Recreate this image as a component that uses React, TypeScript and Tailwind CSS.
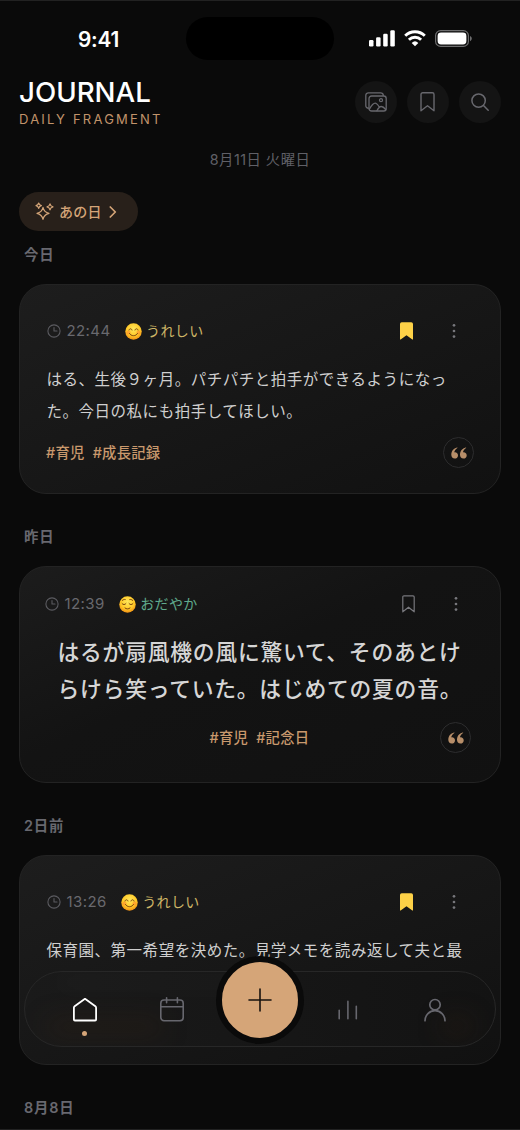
import React from "react";

type Mood = "happy" | "calm";

type Entry = {
  label: string;
  time: string;
  mood: Mood;
  lines: string[];
  tags: string[];
  saved: boolean;
  featured?: boolean;
};

const entries: Entry[] = [
  {
    label: "今日",
    time: "22:44",
    mood: "happy",
    lines: ["はる、生後９ヶ月。パチパチと拍手ができるようになっ", "た。今日の私にも拍手してほしい。"],
    tags: ["#育児", "#成長記録"],
    saved: true,
  },
  {
    label: "昨日",
    time: "12:39",
    mood: "calm",
    lines: ["はるが扇風機の風に驚いて、そのあとけ", "らけら笑っていた。はじめての夏の音。"],
    tags: ["#育児", "#記念日"],
    saved: false,
    featured: true,
  },
  {
    label: "2日前",
    time: "13:26",
    mood: "happy",
    lines: ["保育園、第一希望を決めた。見学メモを読み返して夫と最"],
    tags: [],
    saved: true,
  },
];

const moods = {
  happy: { label: "うれしい", color: "text-[#cdb566]" },
  calm: { label: "おだやか", color: "text-[#5fa98c]" },
};

function MoodFace({ mood }: { mood: Mood }) {
  return (
    <svg width="17" height="17" viewBox="0 0 34 34" fill="none" className="shrink-0">
      <defs>
        <radialGradient id={`face-${mood}`} cx="0.5" cy="0.35" r="0.68">
          <stop offset="0" stopColor="#ffe85c" />
          <stop offset="0.6" stopColor="#ffc928" />
          <stop offset="1" stopColor="#f08a12" />
        </radialGradient>
      </defs>
      <circle cx="17" cy="17" r="16.5" fill={`url(#face-${mood})`} />
      {mood === "happy" ? (
        <>
          <circle cx="7" cy="19" r="4" fill="#ff7a2e" opacity="0.45" />
          <circle cx="27" cy="19" r="4" fill="#ff7a2e" opacity="0.45" />
          <path d="M8 14c1-3.500 5-3.500 6 0M20 14c1-3.500 5-3.500 6 0M9 21c3 6 13 6 16 0" stroke="#7a4410" strokeWidth="2" strokeLinecap="round" />
        </>
      ) : (
        <path d="M6 15c2 3 6 3 8 0M20 15c2 3 6 3 8 0M6.500 9c2-2 4-2.500 6-2M27.500 9c-2-2-4-2.500-6-2M12 24c3 2.500 7 2.500 10 0" stroke="#7a4410" strokeWidth="2" strokeLinecap="round" />
      )}
    </svg>
  );
}

function ClockIcon() {
  return (
    <svg width="14" height="14" viewBox="0 0 14 14" fill="none" stroke="#5b5b60" strokeWidth="1.100" strokeLinecap="round" strokeLinejoin="round">
      <circle cx="7" cy="7" r="6.100" />
      <path d="M7 3.500V7h3" />
    </svg>
  );
}

function SmallBookmark({ saved }: { saved: boolean }) {
  return saved ? (
    <svg width="13" height="18" viewBox="0 0 13 18" fill="#fdd147">
      <path d="M0 2a1.800 1.800 0 0 1 1.800-1.800h9.400A1.800 1.800 0 0 1 13 2v15.200a.4.4 0 0 1-.65.3L6.500 13.200.65 17.500A.4.4 0 0 1 0 17.200Z" />
    </svg>
  ) : (
    <svg width="13" height="18" viewBox="0 0 13 18" fill="none" stroke="#77777c" strokeWidth="1.200" strokeLinejoin="round">
      <path d="M.8 2A1.200 1.200 0 0 1 2 .8h9A1.200 1.200 0 0 1 12.200 2v14.800L6.500 12.200.8 16.800Z" />
    </svg>
  );
}

function QuoteButton() {
  return (
    <button className="flex size-[31px] shrink-0 items-center justify-center rounded-full border border-[#2d2d2e]">
      <svg width="16" height="12" viewBox="0 0 16 12" fill="#b78e69">
        <path d="M6 .4C2.600 1.200.3 4 .3 7.700c0 2.300 1.400 3.900 3.400 3.900 1.900 0 3.300-1.400 3.300-3.200 0-1.800-1.300-3.100-3-3.100-.4 0-.7.1-.8.1C3.500 3.700 4.600 2.200 6.300 1c.4-.3.1-.7-.3-.6Z" />
        <path d="M14.700.4C11.300 1.200 9 4 9 7.700c0 2.300 1.400 3.900 3.400 3.900 1.900 0 3.300-1.400 3.300-3.200 0-1.800-1.300-3.100-3-3.100-.4 0-.7.1-.8.1.3-1.700 1.400-3.200 3.100-4.400.4-.3.1-.7-.3-.6Z" />
      </svg>
    </button>
  );
}

function StatusBar() {
  return (
    <div className="flex h-[75px] items-center pl-[77px] pr-[48px]">
      <div className="w-[109px] pt-[2px] pl-[1px] text-[20.800px] font-semibold tracking-[-0.200px] text-white">9:41</div>
      <div className="h-[43px] w-[148px] rounded-full bg-black" />
      <div className="ml-auto flex items-center gap-[9px]">
        <svg width="26" height="17" viewBox="0 0 26 17" fill="#fff">
          <rect x="0" y="10" width="4.500" height="6.500" rx="1.200" />
          <rect x="7.100" y="7.200" width="4.500" height="9.300" rx="1.200" />
          <rect x="14.200" y="3.800" width="4.500" height="12.700" rx="1.200" />
          <rect x="21.300" y="0.300" width="4.500" height="16.200" rx="1.200" />
        </svg>
        <svg width="22" height="17" viewBox="0 0 22 17" fill="none" stroke="#fff" strokeWidth="2.900">
          <path d="M1.200 5.700a14 14 0 0 1 19.600 0" />
          <path d="M4.900 9.700a8.700 8.700 0 0 1 12.200 0" />
          <path d="M11 16.300 7.700 12.900a4.800 4.800 0 0 1 6.600 0Z" fill="#fff" stroke="none" />
        </svg>
        <svg width="37" height="17" viewBox="0 0 37 17" fill="none">
          <rect x="0.600" y="0.600" width="32.800" height="15.800" rx="5" stroke="#6d6d6e" strokeWidth="1.200" />
          <rect x="2.600" y="2.500" width="28.800" height="12" rx="3.400" fill="#fff" />
          <path d="M35 6v5.200c1.100-.4 1.800-1.400 1.800-2.600S36.100 6.400 35 6Z" fill="#6d6d6e" />
        </svg>
      </div>
    </div>
  );
}

function RoundButton({ children }: { children: React.ReactNode }) {
  return <button className="flex size-[42px] items-center justify-center rounded-full bg-[#141414]">{children}</button>;
}

function Header() {
  return (
    <header className="flex h-[55px] items-start justify-between pl-[19px] pr-[19.500px]">
      <div>
        <h1 className="mt-[1px] text-[27.700px] leading-[30px] font-medium text-white">JOURNAL</h1>
        <p className="mt-[3px] text-[13px] leading-[18px] tracking-[2.200px] text-[#c1946b]">DAILY FRAGMENT</p>
      </div>
      <div className="mt-[5px] flex gap-[10px]">
        <RoundButton>
          <svg width="22" height="20" viewBox="0 0 22 20" fill="none" stroke="#68686e" strokeWidth="1.300" strokeLinecap="round" strokeLinejoin="round">
            <path d="M3.500 16.200A2.500 2.500 0 0 1 .8 13.700V3.400A2.600 2.600 0 0 1 3.400.8h12.300a2.600 2.600 0 0 1 2.600 2.600" />
            <rect x="4" y="4" width="17.200" height="15" rx="2.600" />
            <circle cx="16" cy="8.200" r="1.500" />
            <path d="M4.400 17.200c2.400-4.300 4.600-6 5.800-6s2.200 1.100 4 3.600M11.900 18.700c1.700-3.200 3-4.200 4.300-4.200s2.900 1 4.500 3" />
          </svg>
        </RoundButton>
        <RoundButton>
          <svg width="15" height="20" viewBox="0 0 15 20" fill="none" stroke="#68686e" strokeWidth="1.400" strokeLinejoin="round">
            <path d="M1 2.500A1.700 1.700 0 0 1 2.700.8h9.600A1.700 1.700 0 0 1 14 2.500v16.300l-6.500-5.100L1 18.800Z" />
          </svg>
        </RoundButton>
        <RoundButton>
          <svg width="18" height="18" viewBox="0 0 18 18" fill="none" stroke="#68686e" strokeWidth="1.500" strokeLinecap="round">
            <circle cx="7.600" cy="7.600" r="6.700" />
            <path d="m12.500 12.500 4.700 4.700" />
          </svg>
        </RoundButton>
      </div>
    </header>
  );
}

function EntryCard({ entry }: { entry: Entry }) {
  const mood = moods[entry.mood];
  const featured = entry.featured;

  return (
    <article
      className={`mx-[19px] overflow-hidden rounded-[27px] border border-[#232323] ${
        featured
          ? "h-[217px] bg-linear-to-br from-[#1c1c1c] via-[#131313] via-45% to-[#111111] pt-[25px] pr-[29px] pl-[25px]"
          : "h-[210px] bg-linear-to-br from-[#1d1d1d] to-[#111111] pt-[34px] pr-[26px] pl-[27px]"
      }`}
    >
      <div className="flex h-6 items-center">
        <ClockIcon />
        <span className="ml-[5.500px] text-[15px] tracking-[0.400px] text-[#69696e]">{entry.time}</span>
        <span className="ml-[14px] flex items-center gap-[4.500px]">
          <MoodFace mood={entry.mood} />
          <span className={`-mt-[1px] text-[14px] tracking-[0.400px] ${mood.color}`}>{mood.label}</span>
        </span>
        <span className={`ml-auto flex items-center gap-[39px] ${featured ? "pr-[13px]" : "pr-[18px]"}`}>
          <SmallBookmark saved={entry.saved} />
          <svg width="4" height="16" viewBox="0 0 4 16" fill="#77777c">
            <circle cx="2" cy="2.300" r="1.350" />
            <circle cx="2" cy="8" r="1.350" />
            <circle cx="2" cy="13.600" r="1.350" />
          </svg>
        </span>
      </div>
      <div
        className={
          featured
            ? "mt-[18px] ml-[12.500px] text-[21.800px] leading-[37px] font-medium tracking-[0.750px] whitespace-nowrap text-[#d6d6d6]"
            : "mt-[21px] ml-[-0.500px] text-[15.500px] leading-[32px] tracking-[0.520px] whitespace-nowrap text-[#cfcfcf]"
        }
      >
        {entry.lines.map((line) => (
          <p key={line}>{line}</p>
        ))}
      </div>
      {entry.tags.length > 0 && (
        <div className={`flex items-center ${featured ? "mt-[14px]" : "mt-[9px]"}`}>
          {featured && <span className="w-[34px]" />}
          <div className={`flex gap-[8px] text-[14.300px] font-medium tracking-[0.300px] text-[#c9996d] ${featured ? "grow justify-center" : "ml-[-1px]"}`}>
            {entry.tags.map((tag) => (
              <span key={tag}>{tag}</span>
            ))}
          </div>
          <div className={featured ? "" : "ml-auto"}>
            <QuoteButton />
          </div>
        </div>
      )}
    </article>
  );
}

function DayLabel({ children }: { children: React.ReactNode }) {
  return <h2 className="ml-[24px] text-[14.400px] leading-[20px] font-semibold tracking-[0.800px] text-[#68686f]">{children}</h2>;
}

function TabBar() {
  return (
    <nav className="absolute top-[970px] left-[24px] h-[76px] w-[472px]">
      <div className="relative h-full overflow-hidden rounded-full border border-[#272727] bg-linear-to-r from-[#1a1a1a] to-[#131313]">
        <div className="absolute top-[46px] left-[20px] h-[18px] w-[120px] rounded-full bg-[#3a2410]/25 blur-md" />
        <div className="absolute top-[44px] left-[415px] h-[20px] w-[34px] rounded-full bg-[#3a2410]/25 blur-md" />
        <div className="absolute top-[4px] left-[30px] h-[12px] w-[190px] rounded-full bg-white/3 blur-md" />
        <div className="relative grid h-full grid-cols-5 items-center px-[16px] pt-[2px]">
          <div className="relative flex justify-center">
            <svg width="26" height="26" viewBox="0 0 26 26" fill="none" stroke="#fff" strokeWidth="1.800" strokeLinejoin="round">
              <path d="M1.900 10.800a2 2 0 0 1 .75-1.500L13 1.800l10.350 7.500a2 2 0 0 1 .75 1.500v11.700a1 1 0 0 1-1 1H2.900a1 1 0 0 1-1-1Z" />
            </svg>
            <span className="absolute top-[34px] size-[5px] rounded-full bg-[#d5a578]" />
          </div>
          <svg width="26" height="26" viewBox="0 0 26 26" fill="none" stroke="#67676e" strokeWidth="1.600" strokeLinecap="round" strokeLinejoin="round" className="justify-self-center">
            <rect x="1.800" y="3" width="22.400" height="20.700" rx="3.200" />
            <path d="M1.800 9.700h22.400M7.600.8v5M18.400.8v5" />
          </svg>
          <span />
          <svg width="22" height="20" viewBox="0 0 22 20" fill="none" stroke="#67676e" strokeWidth="1.600" strokeLinecap="round" className="justify-self-center">
            <path d="M2.200 10.200v8.500M10.900 1.400v17.300M19.300 6.300v12.400" />
          </svg>
          <svg width="24" height="24" viewBox="0 0 24 24" fill="none" stroke="#67676e" strokeWidth="1.700" strokeLinecap="round" className="justify-self-center">
            <circle cx="12" cy="6.700" r="5.200" />
            <path d="M2 22.700a10 10 0 0 1 20 0" />
          </svg>
        </div>
      </div>
      <button className="absolute top-[-15px] left-[192px] flex size-[88px] items-center justify-center rounded-full border-[6px] border-[#0a0a0a] bg-[#d5a578]">
        <svg width="24" height="24" viewBox="0 0 24 24" stroke="#17120e" strokeWidth="1.600" strokeLinecap="round">
          <path d="M12 1v22M1 12h22" />
        </svg>
      </button>
    </nav>
  );
}

export default function App() {
  return (
    <div
      lang="ja"
      className="relative h-[1130px] w-[520px] overflow-hidden border-y border-[#222222] bg-[#0a0a0a] font-['Inter','Noto_Sans_CJK_JP',sans-serif]"
    >
      <StatusBar />
      <Header />
      <p className="mt-[18px] text-center text-[14.300px] leading-[22px] tracking-[0.500px] text-[#606067]">8月11日 火曜日</p>
      <button className="mt-[21px] ml-[19px] flex h-[39px] w-[119px] items-center rounded-full bg-[#28201a] pl-[16px] text-[#d5a578]">
        <svg width="19" height="19" viewBox="0 0 19 19" fill="none" stroke="currentColor" strokeWidth="1.200" strokeLinejoin="round">
          <path d="M8 5.300c.8 3.700 2.300 5.200 6 6-3.700.8-5.200 2.300-6 6-.8-3.700-2.300-5.200-6-6 3.700-.8 5.200-2.300 6-6Z" />
          <path d="M3.700 1c.4 1.700 1 2.300 2.700 2.700-1.700.4-2.300 1-2.700 2.700C3.300 4.700 2.700 4.100 1 3.700 2.700 3.300 3.300 2.700 3.700 1ZM15 1.800c.4 1.900 1.100 2.600 3 3-1.900.4-2.600 1.100-3 3-.4-1.900-1.100-2.600-3-3 1.900-.4 2.600-1.100 3-3Z" />
        </svg>
        <span className="ml-[5px] text-[14px] font-medium tracking-[0.200px]">あの日</span>
        <svg width="8" height="12" viewBox="0 0 8 12" fill="none" stroke="currentColor" strokeWidth="1.700" strokeLinecap="round" strokeLinejoin="round" className="ml-[7px]">
          <path d="m1.300 1 5 5-5 5" />
        </svg>
      </button>
      <div className="mt-[14px] flex flex-col gap-[33px]">
        {entries.map((entry) => (
          <section key={entry.label} className="flex flex-col gap-[19px]">
            <DayLabel>{entry.label}</DayLabel>
            <EntryCard entry={entry} />
          </section>
        ))}
        <DayLabel>8月8日</DayLabel>
      </div>
      <TabBar />
    </div>
  );
}
